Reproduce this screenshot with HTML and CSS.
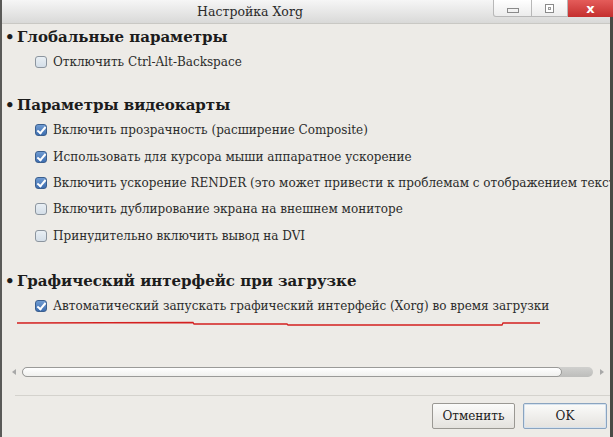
FILE: index.html
```html
<!DOCTYPE html>
<html lang="ru">
<head>
<meta charset="utf-8">
<title>Настройка Xorg</title>
<link rel="stylesheet" href="styles.css">
</head>
<body>
<div class="window">
  <div class="titlebar">
    <div class="title">Настройка Xorg</div>
    <div class="controls">
      <div class="wbtn min"><span class="min-glyph"></span></div>
      <div class="wbtn max"><span class="max-glyph"></span></div>
      <div class="wbtn close">x</div>
    </div>
  </div>
  <div class="body">
    <div class="scroll">
      <div class="content">
        <div class="section s1">
          <div class="heading"><span class="bullet">•</span>Глобальные параметры</div>
          <div class="row"><span class="cb"></span><span class="label">Отключить Ctrl-Alt-Backspace</span></div>
        </div>
        <div class="section s2">
          <div class="heading"><span class="bullet">•</span>Параметры видеокарты</div>
          <div class="row"><span class="cb on"></span><span class="label">Включить прозрачность (расширение Composite)</span></div>
          <div class="row"><span class="cb on"></span><span class="label">Использовать для курсора мыши аппаратное ускорение</span></div>
          <div class="row"><span class="cb on"></span><span class="label">Включить ускорение RENDER (это может привести к проблемам с отображением текста)</span></div>
          <div class="row"><span class="cb"></span><span class="label">Включить дублирование экрана на внешнем мониторе</span></div>
          <div class="row"><span class="cb"></span><span class="label">Принудительно включить вывод на DVI</span></div>
        </div>
        <div class="section s3">
          <div class="heading"><span class="bullet">•</span>Графический интерфейс при загрузке</div>
          <div class="row"><span class="cb on"></span><span class="label">Автоматический запускать графический интерфейс (Xorg) во время загрузки</span></div>
        </div>
      </div>
      <svg class="underline" width="560" height="10" viewBox="0 0 560 10">
        <polyline points="15,4 191,3.5 192,5 285,5 286,6 500,6 501,4 538,4" fill="none" stroke="#d42020" stroke-width="1.3"/>
      </svg>
    </div>
    <div class="hscroll">
      <span class="arrow left"></span>
      <div class="trough"><div class="thumb"></div></div>
      <span class="arrow right"></span>
    </div>
    <div class="sep"></div>
    <div class="buttons">
      <div class="btn">Отменить</div>
      <div class="btn default">OK</div>
    </div>
  </div>
</div>
</body>
</html>
```
FILE: styles.css
```css
html, body {
  margin: 0;
  padding: 0;
  background: #6b6b66;
}
body {
  width: 613px;
  height: 437px;
  overflow: hidden;
  font-family: "DejaVu Serif", serif;
}
.window {
  width: 613px;
  height: 437px;
  box-sizing: border-box;
  border-left: 2px solid #5a5a58;
  border-right: 3px solid #4a4a46;
  background: #edebe7;
  display: flex;
  flex-direction: column;
}
.titlebar {
  height: 23px;
  flex: none;
  position: relative;
  background: linear-gradient(#f6f6f6, #d9d9d8);
  border-bottom: 1px solid #c9c8c4;
  display: flex;
  align-items: flex-start;
}
.title {
  flex: 1;
  text-align: center;
  font-size: 12.5px;
  line-height: 23px;
  color: #2a2a2a;
  padding-right: 112px;
}
.controls {
  position: absolute;
  right: -3px;
  top: 0;
  display: flex;
}
.wbtn {
  height: 17px;
  box-sizing: border-box;
  border: 1px solid #b8b8b8;
  border-top: none;
  background: linear-gradient(#ffffff, #ececec);
  display: flex;
  align-items: center;
  justify-content: center;
}
.wbtn.min { width: 39px; border-radius: 0 0 0 3px; }
.wbtn.max { width: 36px; border-left: none; }
.wbtn.close {
  width: 45px;
  border: none;
  background: linear-gradient(#e45c5a, #c42f2e);
  color: #fff;
  font-family: "DejaVu Sans", sans-serif;
  font-weight: bold;
  font-size: 13px;
  line-height: 16px;
}
.min-glyph {
  width: 10px;
  height: 3px;
  border: 1px solid #8a8a8a;
  margin-top: 5px;
}
.max-glyph {
  width: 7px;
  height: 7px;
  border: 1px solid #8a8a8a;
  box-shadow: inset 0 0 0 2px #fff, inset 0 0 0 3px #9a9a9a;
}
.body {
  flex: 1;
  display: flex;
  flex-direction: column;
}
.scroll {
  position: relative;
  height: 337px;
  overflow: hidden;
  flex: none;
}
.content {
  padding-top: 2px;
  white-space: nowrap;
}
.s2 { margin-top: 19px; }
.s3 { margin-top: 21px; }
.heading {
  height: 23px;
  line-height: 23px;
  font-weight: bold;
  font-size: 15px;
  color: #1c1c1c;
  padding-left: 3px;
}
.bullet {
  display: inline-block;
  width: 12px;
}
.row {
  height: 26.3px;
  display: flex;
  align-items: center;
  padding-left: 33px;
}
.label {
  font-size: 12px;
  color: #2b2b2b;
  margin-left: 6px;
}
.cb {
  width: 12px;
  height: 12px;
  box-sizing: border-box;
  border: 1px solid #8c959f;
  border-radius: 3px;
  background: linear-gradient(#e9eff4, #d4dee8);
  flex: none;
  position: relative;
}
.cb.on {
  border-color: #3b5f8e;
  background: linear-gradient(#6f9bd2, #3e6eb0);
}
.cb.on::after {
  content: "";
  position: absolute;
  left: 3px;
  top: 0px;
  width: 3px;
  height: 7px;
  border: solid #fff;
  border-width: 0 2px 2px 0;
  transform: rotate(40deg);
}
.underline {
  position: absolute;
  left: 0;
  top: 295px;
}
.hscroll {
  height: 14px;
  display: flex;
  align-items: center;
  padding: 0 6px 0 10px;
  margin-top: 4px;
}
.arrow {
  width: 0;
  height: 0;
  border-top: 3px solid transparent;
  border-bottom: 3px solid transparent;
  flex: none;
}
.arrow.left { border-right: 4px solid #a8a8a8; }
.arrow.right { border-left: 4px solid #a8a8a8; }
.trough {
  flex: 1;
  height: 10px;
  margin: 0 7px 0 6px;
  border-radius: 5px;
  background: linear-gradient(#d0d0ce, #bdbdbb);
  display: flex;
}
.thumb {
  width: 540px;
  height: 10px;
  box-sizing: border-box;
  border: 1px solid #9a9a98;
  border-radius: 5px;
  background: linear-gradient(#ffffff, #f0f0ee);
}
.sep {
  height: 1px;
  background: #d4d2cd;
  margin: 16px 0 0 13px;
}
.buttons {
  display: flex;
  justify-content: flex-end;
  gap: 8px;
  padding: 7px 3px 0 0;
}
.btn {
  height: 26px;
  box-sizing: border-box;
  border: 1px solid #9a9893;
  border-radius: 2px;
  background: linear-gradient(#fbfbfa, #e4e2de);
  font-size: 12px;
  line-height: 24px;
  text-align: center;
  color: #222;
  width: 83px;
}
.btn.default {
  width: 84px;
  border-color: #8aa4c0;
  box-shadow: inset 0 0 0 1px #d6e2ee;
}
```
